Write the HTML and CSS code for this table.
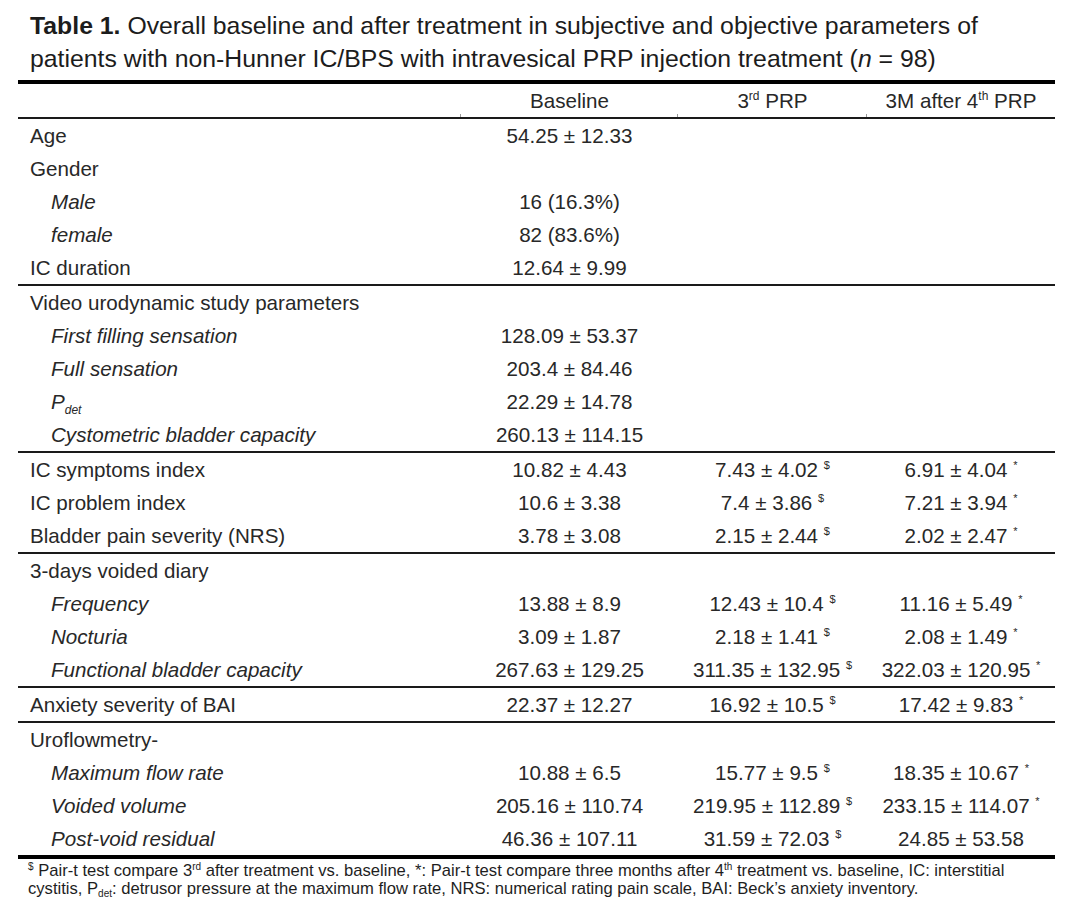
FILE: index.html
```html
<!DOCTYPE html>
<html>
<head>
<meta charset="utf-8">
<link rel="stylesheet" href="styles.css">
</head>
<body>
<div class="page">
  <div class="caption"><b>Table 1.</b> Overall baseline and after treatment in subjective and objective parameters of<br>patients with non-Hunner IC/BPS with intravesical PRP injection treatment (<i>n</i> = 98)</div>
  <table class="data">
    <colgroup>
      <col class="c1"><col class="c2"><col class="c3"><col class="c4">
    </colgroup>
    <thead>
      <tr class="head">
        <th></th>
        <th><span class="tick"></span>Baseline</th>
        <th><span class="tick"></span>3<sup>rd</sup> PRP</th>
        <th><span class="tick"></span>3M after 4<sup>th</sup> PRP</th>
      </tr>
    </thead>
    <tbody class="sec">
      <tr><td class="lab">Age</td><td>54.25 ± 12.33</td><td></td><td></td></tr>
      <tr><td class="lab">Gender</td><td></td><td></td><td></td></tr>
      <tr><td class="lab sub">Male</td><td>16 (16.3%)</td><td></td><td></td></tr>
      <tr><td class="lab sub">female</td><td>82 (83.6%)</td><td></td><td></td></tr>
      <tr><td class="lab">IC duration</td><td>12.64 ± 9.99</td><td></td><td></td></tr>
    </tbody>
    <tbody class="sec">
      <tr><td class="lab">Video urodynamic study parameters</td><td></td><td></td><td></td></tr>
      <tr><td class="lab sub">First filling sensation</td><td>128.09 ± 53.37</td><td></td><td></td></tr>
      <tr><td class="lab sub">Full sensation</td><td>203.4 ± 84.46</td><td></td><td></td></tr>
      <tr><td class="lab sub">P<sub>det</sub></td><td>22.29 ± 14.78</td><td></td><td></td></tr>
      <tr><td class="lab sub">Cystometric bladder capacity</td><td>260.13 ± 114.15</td><td></td><td></td></tr>
    </tbody>
    <tbody class="sec">
      <tr><td class="lab">IC symptoms index</td><td>10.82 ± 4.43</td><td>7.43 ± 4.02 <sup class="m">$</sup></td><td>6.91 ± 4.04 <sup class="m">*</sup></td></tr>
      <tr><td class="lab">IC problem index</td><td>10.6 ± 3.38</td><td>7.4 ± 3.86 <sup class="m">$</sup></td><td>7.21 ± 3.94 <sup class="m">*</sup></td></tr>
      <tr><td class="lab">Bladder pain severity (NRS)</td><td>3.78 ± 3.08</td><td>2.15 ± 2.44 <sup class="m">$</sup></td><td>2.02 ± 2.47 <sup class="m">*</sup></td></tr>
    </tbody>
    <tbody class="sec">
      <tr><td class="lab">3-days voided diary</td><td></td><td></td><td></td></tr>
      <tr><td class="lab sub">Frequency</td><td>13.88 ± 8.9</td><td>12.43 ± 10.4 <sup class="m">$</sup></td><td>11.16 ± 5.49 <sup class="m">*</sup></td></tr>
      <tr><td class="lab sub">Nocturia</td><td>3.09 ± 1.87</td><td>2.18 ± 1.41 <sup class="m">$</sup></td><td>2.08 ± 1.49 <sup class="m">*</sup></td></tr>
      <tr><td class="lab sub">Functional bladder capacity</td><td>267.63 ± 129.25</td><td>311.35 ± 132.95 <sup class="m">$</sup></td><td>322.03 ± 120.95 <sup class="m">*</sup></td></tr>
    </tbody>
    <tbody class="sec">
      <tr><td class="lab">Anxiety severity of BAI</td><td>22.37 ± 12.27</td><td>16.92 ± 10.5 <sup class="m">$</sup></td><td>17.42 ± 9.83 <sup class="m">*</sup></td></tr>
    </tbody>
    <tbody class="sec last">
      <tr><td class="lab">Uroflowmetry-</td><td></td><td></td><td></td></tr>
      <tr><td class="lab sub">Maximum flow rate</td><td>10.88 ± 6.5</td><td>15.77 ± 9.5 <sup class="m">$</sup></td><td>18.35 ± 10.67 <sup class="m">*</sup></td></tr>
      <tr><td class="lab sub">Voided volume</td><td>205.16 ± 110.74</td><td>219.95 ± 112.89 <sup class="m">$</sup></td><td>233.15 ± 114.07 <sup class="m">*</sup></td></tr>
      <tr><td class="lab sub">Post-void residual</td><td>46.36 ± 107.11</td><td>31.59 ± 72.03 <sup class="m">$</sup></td><td>24.85 ± 53.58</td></tr>
    </tbody>
  </table>
  <div class="notes"><sup>$</sup> Pair-t test compare 3<sup>rd</sup> after treatment vs. baseline, *: Pair-t test compare three months after 4<sup>th</sup> treatment vs. baseline, IC: interstitial<br>cystitis, P<sub>det</sub>: detrusor pressure at the maximum flow rate, NRS: numerical rating pain scale, BAI: Beck’s anxiety inventory.</div>
</div>
</body>
</html>
```
FILE: styles.css
```css
html, body {
  margin: 0;
  padding: 0;
  background: #ffffff;
}
body {
  font-family: "Liberation Sans", Arial, sans-serif;
  color: #282828;
}
.page {
  width: 1080px;
  height: 915px;
  padding: 9px 0 0 18px;
  box-sizing: border-box;
}
.caption {
  font-size: 24.8px;
  line-height: 33px;
  padding-left: 12px;
  color: #1c1c1c;
  margin-bottom: 5px;
  white-space: nowrap;
}
.caption b {
  font-weight: bold;
}
.data {
  width: 1037px;
  border-collapse: collapse;
  table-layout: fixed;
  font-size: 20.6px;
  border-top: 4px solid #000;
}
.c1 { width: 443px; }
.c2 { width: 217px; }
.c3 { width: 189px; }
.c4 { width: 188px; }
.data th, .data td {
  padding: 0;
  height: 33px;
  text-align: center;
  font-weight: normal;
  white-space: nowrap;
  vertical-align: middle;
}
.head th {
  position: relative;
  border-bottom: 2px solid #1a1a1a;
}
.tick {
  position: absolute;
  left: -1px;
  bottom: 0;
  width: 1px;
  height: 3px;
  background: #9a9a9a;
}
.head sup {
  font-size: 12px;
  vertical-align: 8px;
  line-height: 0;
}
.data td.lab {
  text-align: left;
  padding-left: 12px;
}
.data td.lab.sub {
  padding-left: 33px;
  font-style: italic;
}
.lab sub {
  font-size: 12px;
  vertical-align: -5px;
  line-height: 0;
}
.sec {
  border-bottom: 2px solid #1a1a1a;
}
.sec.last {
  border-bottom: 4px solid #000;
}
sup.m {
  font-size: 11px;
  vertical-align: 8px;
  line-height: 0;
}
.notes {
  font-size: 16.6px;
  line-height: 17.5px;
  padding: 3px 0 0 10px;
  color: #1e1e1e;
  white-space: nowrap;
}
.notes sup {
  font-size: 10px;
  vertical-align: 6px;
  line-height: 0;
}
.notes sub {
  font-size: 10px;
  vertical-align: -3px;
  line-height: 0;
}
```
